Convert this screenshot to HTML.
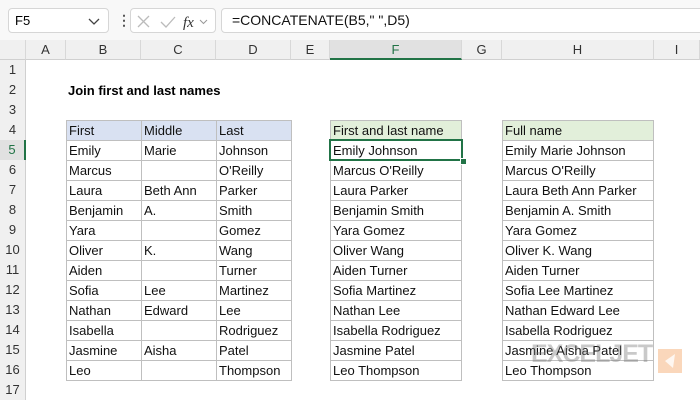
<!DOCTYPE html><html><head><style>
body{margin:0;width:700px;height:400px;overflow:hidden;background:#fff;font-family:"Liberation Sans",sans-serif;position:relative}
.a{position:absolute}
.top{left:0;top:0;width:700px;height:40px;background:#f8f8f8}
.box{background:#fff;border:1px solid #d6d6d6;border-radius:4px;box-sizing:border-box}
.ch{top:40px;height:20px;background:#f0f0f0;border-bottom:1px solid #d0d0d0;box-sizing:border-box;font-size:13px;color:#333;text-align:center;line-height:20px;border-right:1px solid #d8d8d8}
.rh{left:0;width:26px;height:20px;background:#f0f0f0;border-right:1px solid #d0d0d0;box-sizing:border-box;font-size:13px;color:#333;text-align:center;line-height:20px}
table{position:absolute;border-collapse:collapse;font-size:13px;color:#111}
td{border:1px solid #bfbfbf;height:19px;padding:0 0 0 2px;line-height:19px;white-space:nowrap;overflow:hidden}
</style></head><body>
<div class="a top"></div>
<div class="a box" style="left:8px;top:8px;width:101px;height:25px;font-size:13px;line-height:23px;padding-left:6px">F5<svg width="12" height="8" style="position:absolute;right:8px;top:9px"><path d="M1 1l5 5 5-5" stroke="#444" stroke-width="1.3" fill="none"/></svg></div>
<div class="a" style="left:117px;top:12px;font-size:14px;color:#555;line-height:16px;font-weight:bold">&#8942;</div>
<div class="a box" style="left:130px;top:8px;width:86px;height:25px">
<svg width="86" height="25" style="position:absolute;left:0;top:0"><path d="M7 7l11 11M18 7L7 18" stroke="#bbb" stroke-width="1.3" fill="none"/><path d="M30 13l5 5 9-10" stroke="#bbb" stroke-width="1.3" fill="none"/><text x="52" y="18" font-family="Liberation Serif" font-style="italic" font-size="15" fill="#333">fx</text><path d="M69 11l3.5 3.5 3.5-3.5" stroke="#999" fill="none"/></svg></div>
<div class="a box" style="left:221px;top:8px;width:485px;height:25px;font-size:14px;line-height:23px;padding-left:10px;color:#111">=CONCATENATE(B5," ",D5)</div>
<div class="a ch" style="left:0;width:26px"></div>
<div class="a ch" style="left:26px;width:40px">A</div>
<div class="a ch" style="left:66px;width:75px">B</div>
<div class="a ch" style="left:141px;width:75px">C</div>
<div class="a ch" style="left:216px;width:75px">D</div>
<div class="a ch" style="left:291px;width:39px">E</div>
<div class="a ch" style="left:330px;width:132px;background:#e1e1e1;border-bottom:2px solid #217346;color:#217346">F</div>
<div class="a ch" style="left:462px;width:40px">G</div>
<div class="a ch" style="left:502px;width:152px">H</div>
<div class="a ch" style="left:654px;width:46px">I</div>
<div class="a rh" style="top:60px">1</div><div class="a rh" style="top:80px">2</div><div class="a rh" style="top:100px">3</div><div class="a rh" style="top:120px">4</div>
<div class="a rh" style="top:140px;background:#e1e1e1;color:#217346;border-right:2px solid #217346">5</div>
<div class="a rh" style="top:160px">6</div><div class="a rh" style="top:180px">7</div><div class="a rh" style="top:200px">8</div><div class="a rh" style="top:220px">9</div><div class="a rh" style="top:240px">10</div><div class="a rh" style="top:260px">11</div><div class="a rh" style="top:280px">12</div><div class="a rh" style="top:300px">13</div><div class="a rh" style="top:320px">14</div><div class="a rh" style="top:340px">15</div><div class="a rh" style="top:360px">16</div><div class="a rh" style="top:380px">17</div>
<div class="a" style="left:68px;top:82px;font-size:13px;font-weight:bold;line-height:18px">Join first and last names</div>
<table style="left:66px;top:120px;width:226px"><col style="width:75px"><col style="width:75px"><col style="width:75px">
<tr style="background:#d9e1f2"><td>First</td><td>Middle</td><td>Last</td></tr>
<tr><td>Emily</td><td>Marie</td><td>Johnson</td></tr>
<tr><td>Marcus</td><td></td><td>O'Reilly</td></tr>
<tr><td>Laura</td><td>Beth Ann</td><td>Parker</td></tr>
<tr><td>Benjamin</td><td>A.</td><td>Smith</td></tr>
<tr><td>Yara</td><td></td><td>Gomez</td></tr>
<tr><td>Oliver</td><td>K.</td><td>Wang</td></tr>
<tr><td>Aiden</td><td></td><td>Turner</td></tr>
<tr><td>Sofia</td><td>Lee</td><td>Martinez</td></tr>
<tr><td>Nathan</td><td>Edward</td><td>Lee</td></tr>
<tr><td>Isabella</td><td></td><td>Rodriguez</td></tr>
<tr><td>Jasmine</td><td>Aisha</td><td>Patel</td></tr>
<tr><td>Leo</td><td></td><td>Thompson</td></tr>
</table>
<table style="left:330px;top:120px;width:132px">
<tr style="background:#e2efda"><td>First and last name</td></tr>
<tr><td>Emily Johnson</td></tr><tr><td>Marcus O'Reilly</td></tr><tr><td>Laura Parker</td></tr><tr><td>Benjamin Smith</td></tr><tr><td>Yara Gomez</td></tr><tr><td>Oliver Wang</td></tr><tr><td>Aiden Turner</td></tr><tr><td>Sofia Martinez</td></tr><tr><td>Nathan Lee</td></tr><tr><td>Isabella Rodriguez</td></tr><tr><td>Jasmine Patel</td></tr><tr><td>Leo Thompson</td></tr>
</table>
<div class="a" style="left:329px;top:139px;width:134px;height:22px;border:2px solid #217346;box-sizing:border-box"></div>
<div class="a" style="left:460px;top:158px;width:5px;height:5px;background:#217346;border:1px solid #fff"></div>
<table style="left:502px;top:120px;width:152px">
<tr style="background:#e2efda"><td>Full name</td></tr>
<tr><td>Emily Marie Johnson</td></tr><tr><td>Marcus O'Reilly</td></tr><tr><td>Laura Beth Ann Parker</td></tr><tr><td>Benjamin A. Smith</td></tr><tr><td>Yara Gomez</td></tr><tr><td>Oliver K. Wang</td></tr><tr><td>Aiden Turner</td></tr><tr><td>Sofia Lee Martinez</td></tr><tr><td>Nathan Edward Lee</td></tr><tr><td>Isabella Rodriguez</td></tr><tr><td>Jasmine Aisha Patel</td></tr><tr><td>Leo Thompson</td></tr>
</table>
<div class="a" style="left:531px;top:340px;font-size:25px;font-weight:bold;color:rgba(120,120,120,0.4);letter-spacing:-1px">EXCELJET</div>
<div class="a" style="left:658px;top:349px;width:24px;height:24px;background:rgba(240,140,60,0.35)"><svg width="24" height="24"><path d="M17 5L7 12l8 7z" fill="rgba(255,255,255,0.8)"/></svg></div>
</body></html>
